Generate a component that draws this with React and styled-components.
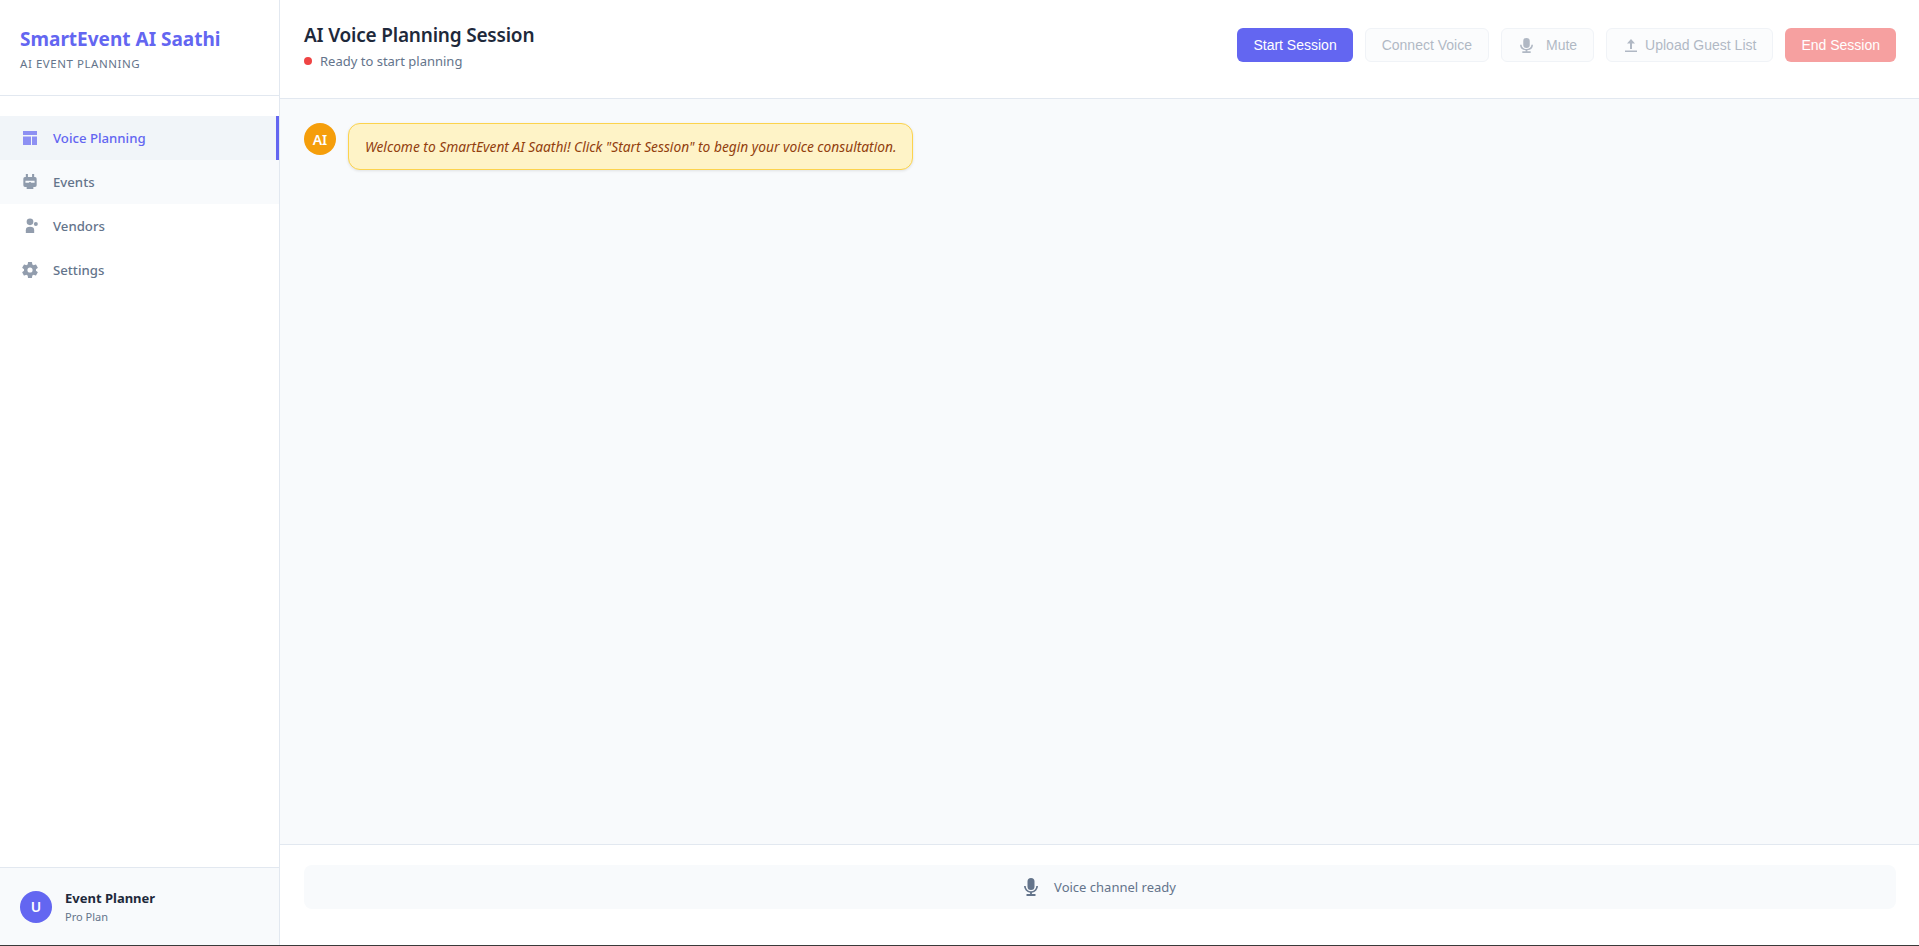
import React from "react";
import styled, { createGlobalStyle } from "styled-components";

const GlobalStyle = createGlobalStyle`
  html, body {
    margin: 0;
    padding: 0;
    height: 100%;
    background: #3a3a3a;
    font-family: "Noto Sans", "Liberation Sans", sans-serif;
  }
  * {
    box-sizing: border-box;
  }
`;

const Shell = styled.div`
  display: flex;
  height: 945px;
  background: #f8fafc;
  overflow: hidden;
`;

const Sidebar = styled.aside`
  width: 280px;
  flex-shrink: 0;
  display: flex;
  flex-direction: column;
  background: #ffffff;
  border-right: 1px solid #e2e8f0;
`;

const Brand = styled.div`
  height: 96px;
  padding: 24px 20px;
  border-bottom: 1px solid #e2e8f0;
`;

const BrandName = styled.h1`
  margin: 0 0 3px;
  font-size: 19px;
  line-height: 30px;
  font-weight: 700;
  color: #6366f1;
`;

const BrandTag = styled.div`
  font-size: 11.5px;
  line-height: 14px;
  color: #64748b;
  text-transform: uppercase;
  letter-spacing: 0.55px;
`;

const Nav = styled.nav`
  flex: 1;
  padding: 20px 0;
`;

const NavItem = styled.a`
  display: flex;
  align-items: center;
  gap: 13px;
  height: 44px;
  padding: 0 20px;
  font-size: 13.2px;
  font-weight: 500;
  color: ${(p) => (p.$active ? "#6366f1" : "#64748b")};
  background: ${(p) => (p.$active ? "#f1f5f9" : p.$hover ? "#f8fafc" : "transparent")};
  border-right: 3px solid ${(p) => (p.$active ? "#6366f1" : "transparent")};
  svg {
    opacity: 0.7;
  }
`;

const Account = styled.div`
  display: flex;
  align-items: center;
  gap: 13px;
  height: 78px;
  padding: 0 20px;
  background: #f8fafc;
  border-top: 1px solid #e2e8f0;
`;

const Avatar = styled.div`
  width: 32px;
  height: 32px;
  flex-shrink: 0;
  display: flex;
  align-items: center;
  justify-content: center;
  border-radius: 50%;
  font-size: 14px;
  font-weight: 600;
  color: #ffffff;
  background: ${(p) => p.$bg};
`;

const AccountName = styled.div`
  font-size: 13px;
  line-height: 18px;
  font-weight: 700;
  color: #1e293b;
`;

const AccountPlan = styled.div`
  font-size: 11px;
  line-height: 16px;
  color: #64748b;
  margin-top: 2px;
`;

const Main = styled.main`
  flex: 1;
  min-width: 0;
  display: flex;
  flex-direction: column;
`;

const Header = styled.header`
  height: 99px;
  display: flex;
  align-items: flex-start;
  justify-content: space-between;
  padding: 20px 23px 20px 24px;
  background: #ffffff;
  border-bottom: 1px solid #e2e8f0;
`;

const Title = styled.h2`
  margin: 0 0 2px;
  font-size: 19px;
  line-height: 30px;
  font-weight: 600;
  letter-spacing: -0.2px;
  color: #1e293b;
`;

const Status = styled.div`
  display: flex;
  align-items: center;
  gap: 8px;
  font-size: 13px;
  line-height: 18px;
  color: #64748b;
`;

const Dot = styled.span`
  width: 8px;
  height: 8px;
  border-radius: 50%;
  background: #ef4444;
`;

const Toolbar = styled.div`
  display: flex;
  gap: 12px;
  margin-top: 8px;
`;

const Button = styled.button`
  display: flex;
  align-items: center;
  gap: 8px;
  height: 34px;
  padding: 0 16px;
  font-family: "Liberation Sans", Arial, sans-serif;
  font-size: 14px;
  font-weight: 400;
  border-radius: 6px;
  border: ${(p) => (p.$variant === "ghost" ? "1px solid #e2e8f0" : "none")};
  color: ${(p) => (p.$variant === "ghost" ? "#64748b" : "#ffffff")};
  background: ${(p) =>
    p.$variant === "primary" ? "#6366f1" : p.$variant === "danger" ? "#ef4444" : "#f8fafc"};
  opacity: ${(p) => (p.$off ? 0.5 : 1)};
`;

const Chat = styled.section`
  flex: 1;
  padding: 24px;
  background: #f8fafc;
`;

const Message = styled.div`
  display: flex;
  align-items: flex-start;
  gap: 12px;
`;

const Bubble = styled.div`
  padding: 12px 16px;
  font-size: 13.75px;
  line-height: 21px;
  font-style: italic;
  color: #92400e;
  background: #fef3c7;
  border: 1px solid #fcd34d;
  border-radius: 12px;
  box-shadow: 0 1px 3px rgba(0, 0, 0, 0.1);
`;

const Footer = styled.footer`
  height: 101px;
  padding: 20px 23px 20px 24px;
  background: #ffffff;
  border-top: 1px solid #e2e8f0;
`;

const Channel = styled.div`
  height: 44px;
  display: flex;
  align-items: center;
  justify-content: center;
  gap: 16px;
  font-size: 13px;
  color: #64748b;
  background: #f8fafc;
  border-radius: 8px;
`;

const MuteGlyph = styled.svg`
  margin: 0 5px 0 2px;
`;

const UploadGlyph = styled.svg`
  margin-left: 2px;
`;

const PlanIcon = () => (
  <svg width="20" height="20" viewBox="0 0 24 24" fill="currentColor">
    <path d="M3.600 3.600h16.800v4.800H3.600zM3.600 10.200h9.600v10.200H3.600zM14.400 10.200h6v10.200h-6z" />
  </svg>
);

const EventIcon = () => (
  <svg width="20" height="20" viewBox="0 0 24 24" fill="currentColor">
    <path
      fillRule="evenodd"
      d="M7 2.500h2.500V6h5V2.500H17V6h1a2 2 0 0 1 2 2v8a2 2 0 0 1-2 2h-2v2.500H8V18H6a2 2 0 0 1-2-2V8a2 2 0 0 1 2-2h1zM6.500 10.500v2.500h4l1-1h1l1 1h4v-2.500z"
    />
  </svg>
);

const VendorIcon = () => (
  <svg width="20" height="20" viewBox="0 0 24 24" fill="currentColor">
    <circle cx="12" cy="7" r="4" />
    <circle cx="19" cy="9.600" r="2.400" />
    <path d="M7 20.500v-3.500a5 4 0 0 1 10 0v3.500z" />
  </svg>
);

const GearIcon = () => (
  <svg width="20" height="20" viewBox="0 0 24 24" fill="currentColor">
    <path d="M19.140 12.940c.04-.3.06-.61.06-.94 0-.32-.02-.64-.07-.94l2.030-1.580a.49.49 0 0 0 .12-.61l-1.920-3.320a.49.49 0 0 0-.59-.22l-2.390.96c-.5-.38-1.030-.7-1.620-.94l-.36-2.540a.484.484 0 0 0-.48-.41h-3.840c-.24 0-.43.17-.47.41l-.36 2.540c-.59.24-1.130.57-1.620.94l-2.390-.96a.49.49 0 0 0-.59.22L2.740 8.870c-.12.21-.08.47.12.61l2.030 1.580c-.05.3-.09.63-.09.94s.02.64.07.94l-2.030 1.580a.49.49 0 0 0-.12.61l1.920 3.320c.12.22.37.29.59.22l2.390-.96c.5.38 1.030.7 1.620.94l.36 2.540c.05.24.24.41.48.41h3.840c.24 0 .44-.17.47-.41l.36-2.540c.59-.24 1.130-.56 1.620-.94l2.390.96c.22.08.47 0 .59-.22l1.920-3.320c.12-.22.07-.47-.12-.61l-2.010-1.580zM12 15.100A3.100 3.100 0 1 1 12 8.900a3.100 3.100 0 0 1 0 6.200z" />
  </svg>
);

const MIC_PATH =
  "M7 0a3.500 3.500 0 0 0-3.500 3.500v5a3.500 3.500 0 0 0 7 0v-5A3.500 3.500 0 0 0 7 0zM0 8h1.700a5.300 5.300 0 0 0 10.600 0H14a7 7 0 0 1-6.100 6.800V16h3.600v2h-9v-2h3.600v-1.200A7 7 0 0 1 0 8z";

const ChannelMic = () => (
  <svg width="14" height="18" viewBox="0 0 14 18" fill="currentColor">
    <path d={MIC_PATH} />
  </svg>
);

const MuteMic = () => (
  <MuteGlyph width="13" height="15" viewBox="0 0 14 18" preserveAspectRatio="none" fill="currentColor">
    <path d={MIC_PATH} />
  </MuteGlyph>
);

const UploadIcon = () => (
  <UploadGlyph width="12" height="13" viewBox="0 0 12 13" fill="currentColor">
    <path d="M6 0l4 4.500H7v5.500H5V4.500H2zM0 11.500h12V13H0z" />
  </UploadGlyph>
);

const NAV_ITEMS = [
  { label: "Voice Planning", icon: <PlanIcon />, active: true },
  { label: "Events", icon: <EventIcon />, hover: true },
  { label: "Vendors", icon: <VendorIcon /> },
  { label: "Settings", icon: <GearIcon /> },
];

const App = () => (
  <Shell>
    <GlobalStyle />
    <Sidebar>
      <Brand>
        <BrandName>SmartEvent AI Saathi</BrandName>
        <BrandTag>AI Event Planning</BrandTag>
      </Brand>
      <Nav>
        {NAV_ITEMS.map((item) => (
          <NavItem key={item.label} $active={item.active} $hover={item.hover}>
            {item.icon}
            {item.label}
          </NavItem>
        ))}
      </Nav>
      <Account>
        <Avatar $bg="#6366f1">U</Avatar>
        <div>
          <AccountName>Event Planner</AccountName>
          <AccountPlan>Pro Plan</AccountPlan>
        </div>
      </Account>
    </Sidebar>
    <Main>
      <Header>
        <div>
          <Title>AI Voice Planning Session</Title>
          <Status>
            <Dot />
            Ready to start planning
          </Status>
        </div>
        <Toolbar>
          <Button $variant="primary">Start Session</Button>
          <Button $variant="ghost" $off>Connect Voice</Button>
          <Button $variant="ghost" $off>
            <MuteMic />
            Mute
          </Button>
          <Button $variant="ghost" $off>
            <UploadIcon />
            Upload Guest List
          </Button>
          <Button $variant="danger" $off>End Session</Button>
        </Toolbar>
      </Header>
      <Chat>
        <Message>
          <Avatar $bg="#f59e0b">AI</Avatar>
          <Bubble>Welcome to SmartEvent AI Saathi! Click "Start Session" to begin your voice consultation.</Bubble>
        </Message>
      </Chat>
      <Footer>
        <Channel>
          <ChannelMic />
          Voice channel ready
        </Channel>
      </Footer>
    </Main>
  </Shell>
);

export default App;
